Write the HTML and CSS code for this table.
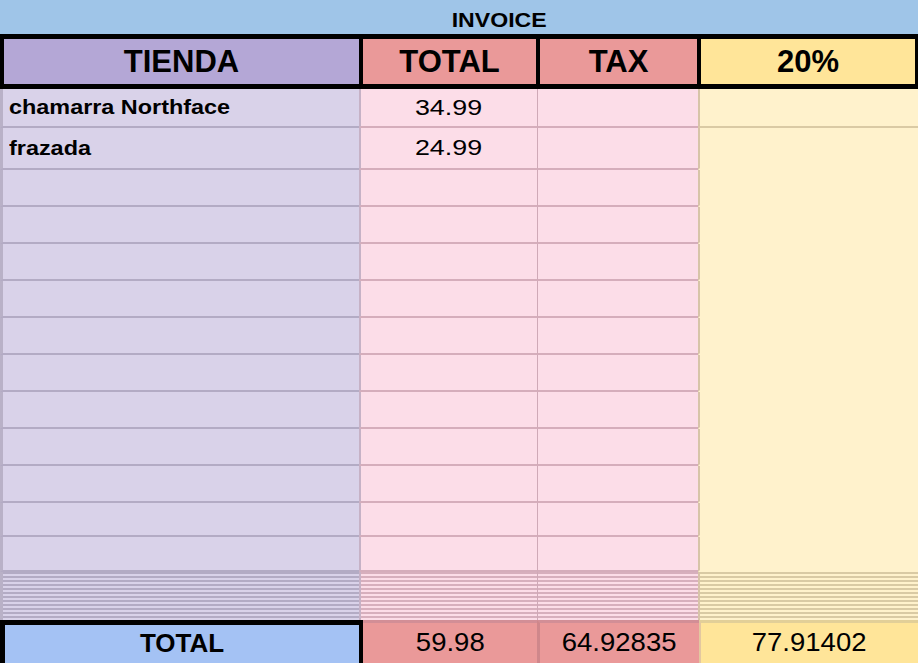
FILE: index.html
```html
<!DOCTYPE html>
<html>
<head>
<meta charset="utf-8">
<title>Invoice</title>
<link rel="stylesheet" href="styles.css">
</head>
<body>
<div class="sheet">
  <div class="title"><span class="sx-title">INVOICE</span></div>

  <div class="row head">
    <div class="hc hc1">TIENDA</div>
    <div class="hc hc2">TOTAL</div>
    <div class="hc hc3">TAX</div>
    <div class="hc hc4">20%</div>
  </div>

  <div class="row data r-first">
    <div class="d d1"><span class="sx-name">chamarra Northface</span></div>
    <div class="d d2"><span class="sx-num">34.99</span></div>
    <div class="d d3"></div>
    <div class="d d4 lined"></div>
  </div>
  <div class="row data r-second">
    <div class="d d1"><span class="sx-name">frazada</span></div>
    <div class="d d2"><span class="sx-num">24.99</span></div>
    <div class="d d3"></div>
    <div class="d d4"></div>
  </div>

  <div class="row data r-std"><div class="d d1"></div><div class="d d2"></div><div class="d d3"></div><div class="d d4"></div></div>
  <div class="row data r-std"><div class="d d1"></div><div class="d d2"></div><div class="d d3"></div><div class="d d4"></div></div>
  <div class="row data r-std"><div class="d d1"></div><div class="d d2"></div><div class="d d3"></div><div class="d d4"></div></div>
  <div class="row data r-std"><div class="d d1"></div><div class="d d2"></div><div class="d d3"></div><div class="d d4"></div></div>
  <div class="row data r-std"><div class="d d1"></div><div class="d d2"></div><div class="d d3"></div><div class="d d4"></div></div>
  <div class="row data r-std"><div class="d d1"></div><div class="d d2"></div><div class="d d3"></div><div class="d d4"></div></div>
  <div class="row data r-std"><div class="d d1"></div><div class="d d2"></div><div class="d d3"></div><div class="d d4"></div></div>
  <div class="row data r-std"><div class="d d1"></div><div class="d d2"></div><div class="d d3"></div><div class="d d4"></div></div>
  <div class="row data r-std"><div class="d d1"></div><div class="d d2"></div><div class="d d3"></div><div class="d d4"></div></div>
  <div class="row data r-short"><div class="d d1"></div><div class="d d2"></div><div class="d d3"></div><div class="d d4"></div></div>
  <div class="row data r-last"><div class="d d1"></div><div class="d d2"></div><div class="d d3"></div><div class="d d4"></div></div>

  <div class="row data r-hidden">
    <div class="d d1 stripes"></div>
    <div class="d d2 stripes"></div>
    <div class="d d3 stripes"></div>
    <div class="d d4 stripes"></div>
  </div>

  <div class="row foot">
    <div class="fc fc1">TOTAL</div>
    <div class="fc fc2"><span class="sx-foot">59.98</span></div>
    <div class="fc fc3"><span class="sx-foot">64.92835</span></div>
    <div class="fc fc4"><span class="sx-foot">77.91402</span></div>
  </div>
</div>
</body>
</html>
```

FILE: styles.css
```css
html, body {
  margin: 0;
  padding: 0;
  width: 918px;
  height: 663px;
  overflow: hidden;
  background: #ffffff;
}

.sheet {
  width: 918px;
  font-family: "Liberation Sans", Arial, sans-serif;
  color: #000;
}

/* Title bar */
.title {
  box-sizing: border-box;
  height: 34px;
  padding-top: 6px;
  padding-left: 80px;
  background: #9fc5e8;
  display: flex;
  align-items: center;
  justify-content: center;
  font-weight: bold;
  font-size: 21px;
}

.sx-title {
  display: inline-block;
  transform: scaleX(1.1);
}

/* Generic row */
.row {
  display: grid;
}

/* Header row */
.head {
  box-sizing: border-box;
  height: 55px;
  grid-template-columns: 359px 177px 161px 221px;
  border-top: 5px solid #000;
  border-bottom: 5px solid #000;
}

.hc {
  display: flex;
  align-items: center;
  justify-content: center;
  border-left: 4px solid #000;
  font-weight: bold;
  font-size: 31px;
}

.hc1 { background: #b4a7d6; }
.hc2 { background: #ea9999; }
.hc3 { background: #ea9999; }
.hc4 { background: #ffe599; border-right: 3px solid #000; }

/* Data rows */
.data {
  grid-template-columns: 359px 178px 161px 220px;
}

.r-first { height: 39px; }
.r-second { height: 42px; }
.r-std { height: 37px; }
.r-short { height: 34px; }
.r-last { height: 35px; }
.r-hidden { height: 48px; }

.d {
  box-sizing: border-box;
  display: flex;
  align-items: center;
  border-bottom: 2px solid transparent;
}

.d1 {
  background: #d9d2e9;
  border-left: 3px solid #b9b1c7;
  border-bottom-color: #b3abc4;
  padding-left: 6px;
  font-weight: bold;
  font-size: 20px;
}

.d2 {
  background: #fcdde8;
  border-left: 2px solid #c6b2c6;
  border-bottom-color: #d5adbb;
  justify-content: center;
  font-size: 22px;
}

.d3 {
  background: #fcdde8;
  border-left: 1px solid #cfa9b7;
  border-bottom-color: #d5adbb;
}

.d4 {
  background: #fff2cc;
  border-left: 2px solid #d7c4a8;
  border-bottom-color: #fff2cc;
}

.d4.lined {
  border-bottom-color: #dacaa4;
}

.sx-name {
  display: inline-block;
  transform: scaleX(1.17);
  transform-origin: left center;
  white-space: nowrap;
}

.sx-num {
  display: inline-block;
  transform: scaleX(1.22);
}

/* Collapsed (hidden) rows rendered as dense stripes */
.stripes {
  border-bottom: 0;
}

.d1.stripes {
  background: repeating-linear-gradient(to bottom, #b3abc4 0, #b3abc4 2px, #d9d2e9 2px, #d9d2e9 4px);
}

.d2.stripes, .d3.stripes {
  background: repeating-linear-gradient(to bottom, #d7afbd 0, #d7afbd 2px, #fcdde8 2px, #fcdde8 4px);
}

.d4.stripes {
  background: repeating-linear-gradient(to bottom, #d9caa4 0, #d9caa4 2px, #fff2cc 2px, #fff2cc 4px);
}

/* Footer total row */
.foot {
  height: 45px;
  grid-template-columns: 363px 174px 162px 219px;
}

.fc {
  box-sizing: border-box;
  display: flex;
  align-items: center;
  justify-content: center;
  padding-bottom: 4px;
  font-size: 25px;
}

.fc1 {
  background: #a4c2f4;
  border-top: 5px solid #000;
  border-left: 5px solid #000;
  border-right: 4px solid #000;
  font-weight: bold;
  font-size: 26px;
}

.fc2 {
  background: #ea9999;
  border-top: 3px solid #d28e96;
}

.fc3 {
  background: #ea9999;
  border-top: 3px solid #d28e96;
  border-left: 3px solid #cf878b;
}

.fc4 {
  background: #ffe599;
  border-top: 3px solid #e2cf98;
  border-left: 2px solid #e3c7a0;
}

.sx-foot {
  display: inline-block;
  transform: scaleX(1.1);
}
```
